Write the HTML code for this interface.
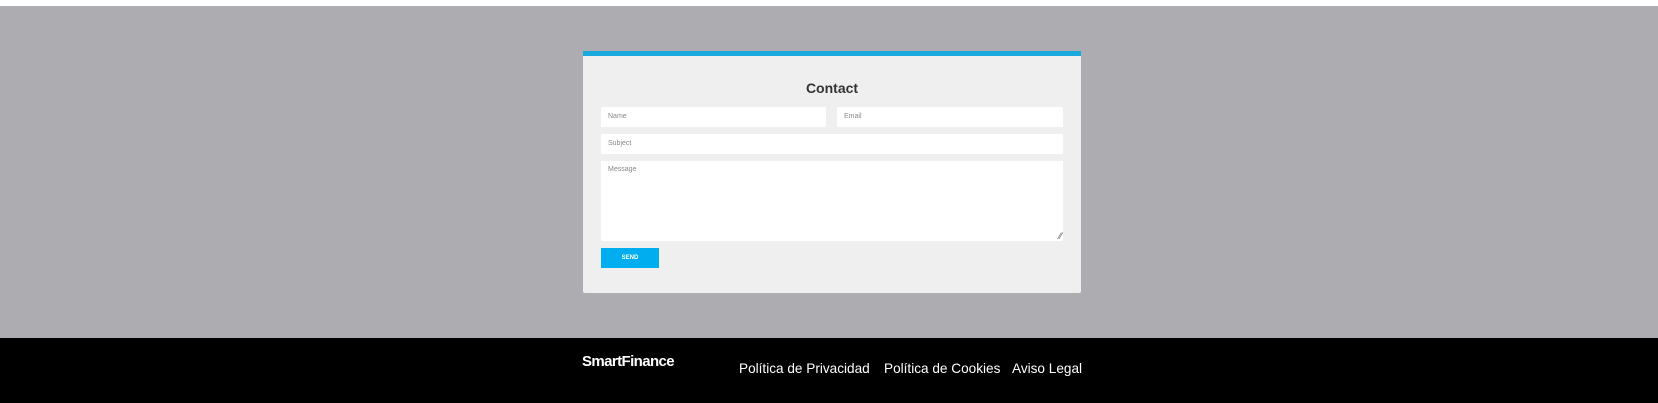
<!DOCTYPE html><html><head><style>
body{margin:0;width:1658px;height:403px;background:#fff;font-family:"Liberation Sans",sans-serif;position:relative;overflow:hidden}
.g{position:absolute;left:0;top:6px;width:1658px;height:332px;background:#adacb0}
.f{position:absolute;left:0;top:338px;width:1658px;height:65px;background:#000}
.card{position:absolute;left:583px;top:51px;width:498px;height:242px;background:#efefef;border-radius:0 0 2px 2px}
.bar{position:absolute;left:0;top:0;width:498px;height:5px;background:#1aa9dd}
.i{position:absolute;background:#fff;font-size:7px;color:#888;box-sizing:border-box;padding-left:7px;line-height:20px;border-radius:1px}
.t{position:absolute;left:0;width:498px;text-align:center;top:29px;font-size:14px;font-weight:bold;color:#333}
.s{position:absolute;left:18px;top:197px;width:58px;height:20px;background:#00aeef;color:#fff;font-size:6px;font-weight:bold;text-align:center;line-height:20px}
.l{position:absolute;color:#fff;font-size:13.6px;top:361px}
</style></head><body>
<div class="g"></div>
<div class="card"><div class="bar"></div><div class="t">Contact</div>
<div class="i" style="left:18px;top:56px;width:225px;height:20px">Name</div>
<div class="i" style="left:254px;top:56px;width:209px;height:20px;width:208px;width:226px">Email</div>
<div class="i" style="left:18px;top:83px;width:462px;height:20px">Subject</div>
<div class="i" style="left:18px;top:110px;width:462px;height:80px;line-height:18px">Message<span style="position:absolute;right:1px;bottom:0;font-size:9px;color:#555;line-height:9px">⁄⁄</span></div>
<div class="s">SEND</div></div>
<div class="f"></div>
<div class="l" style="left:582px;top:353px;font-weight:bold;font-size:15px;letter-spacing:-0.6px">SmartFinance</div>
<div class="l" style="left:739px">Política de Privacidad</div>
<div class="l" style="left:884px">Política de Cookies</div>
<div class="l" style="left:1012px">Aviso Legal</div>
</body></html>
